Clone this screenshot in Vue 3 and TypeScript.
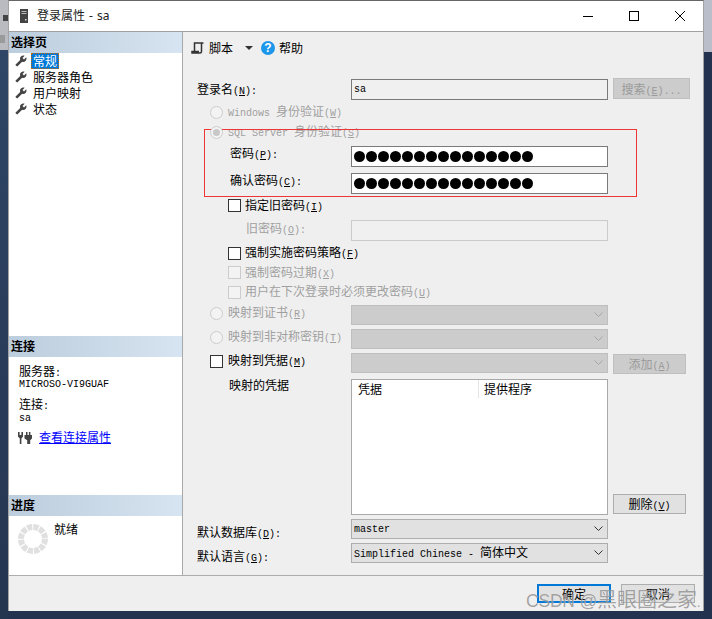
<script setup lang="ts">
const dots: number[] = Array.from({ length: 15 }, (_, i) => i)
const navItems: string[] = ['常规', '服务器角色', '用户映射', '状态']
const wrench =
  'M1.3 19l9.1-9.1c-.9-2.3-.4-5 1.5-6.9 2-2 5-2.4 7.4-1.3L15 6l3 3 4.4-4.3c1.2 2.4.7 5.4-1.3 7.4-1.9 1.9-4.6 2.4-6.9 1.5l-9.1 9.1c-.4.4-1 .4-1.4 0l-2.3-2.3c-.5-.4-.5-1.1-.1-1.4z'
</script>

<template>
  <div class="desk">
    <div class="strip-left"><span class="blot"></span><span class="patch"></span></div>
    <div class="strip-right"></div>

    <div class="win">
      <header class="title">
        <svg class="srv" width="8" height="14" viewBox="0 0 8 14">
          <rect width="8" height="14" fill="#444" />
          <rect x="1.5" y="2" width="5" height="1" fill="#bbb" />
          <rect x="1.5" y="4" width="5" height="1" fill="#bbb" />
          <rect x="5" y="10" width="1.5" height="1.5" fill="#ddd" />
        </svg>
        <span class="title-text">登录属性 - sa</span>
        <div class="controls">
          <div class="ctl">
            <svg width="10" height="10" viewBox="0 0 10 10"><path d="M0 5.5H10" stroke="#000" fill="none" /></svg>
          </div>
          <div class="ctl">
            <svg width="10" height="10" viewBox="0 0 10 10"><rect x=".5" y=".5" width="9" height="9" stroke="#000" fill="none" /></svg>
          </div>
          <div class="ctl">
            <svg width="10" height="10" viewBox="0 0 10 10"><path d="M0 0L10 10M10 0L0 10" stroke="#000" fill="none" /></svg>
          </div>
        </div>
      </header>

      <div class="main">
        <aside class="side">
          <section class="nav">
            <h3 class="sec">选择页</h3>
            <ul class="nav-list">
              <li v-for="(item, i) in navItems" :key="item" class="nav-item">
                <svg width="12" height="12" viewBox="0 0 24 24"><path :d="wrench" fill="#444" /></svg>
                <span :class="{ sel: i === 0 }">{{ item }}</span>
              </li>
            </ul>
          </section>

          <section class="conn">
            <h3 class="sec">连接</h3>
            <div class="conn-body">
              <div class="k">服务器<span class="l">:</span></div>
              <div class="v l">MICROSO-VI9GUAF</div>
              <div class="k k2">连接<span class="l">:</span></div>
              <div class="v v2 l">sa</div>
              <div class="link-row">
                <svg class="plug" width="14" height="14" viewBox="0 0 14 14" fill="#444">
                  <path d="M0 1h1.6v3h1.8V1H5v4.5L3.4 7.5V13H1.8V7.5L0 5.5z" />
                  <path d="M8 1h1.5v3h1.4V1h1.5v3H14v3.5l-1.8 1.7V13h-3V9.2L6.5 7.5V4H8z" />
                </svg>
                <a class="link">查看连接属性</a>
              </div>
            </div>
          </section>

          <section class="prog">
            <h3 class="sec">进度</h3>
            <div class="prog-body">
              <svg class="spin" width="30" height="30" viewBox="0 0 30 30">
                <circle cx="15" cy="15" r="12" fill="none" stroke="#e0e0e0" stroke-width="6" stroke-dasharray="5.2 1.08" />
              </svg>
              <span class="ready">就绪</span>
            </div>
          </section>
        </aside>

        <div class="pane">
          <div class="toolbar">
            <svg width="13" height="12" viewBox="0 0 13 12" fill="none" stroke="#333" stroke-width="1.5">
              <path d="M3.5 9V1H12.5M10.5 1V9.5C10.5 10.5 10 11 9 11H1V9.5H8" />
            </svg>
            <span class="tb-text">脚本</span>
            <span class="caret"></span>
            <span class="help">?</span>
            <span class="tb-text help-text">帮助</span>
          </div>

          <form class="form" @submit.prevent>
            <div class="redbox"></div>

            <div class="row h22">
              <label class="lab">登录名<span class="l">(<u>N</u>):</span></label>
              <div class="field ro l">sa</div>
              <button class="btn off search" type="button">搜索<span class="l">(<u>E</u>)...</span></button>
            </div>

            <div class="row h20 mt2">
              <div class="opt off-text in13"><span class="radio dis"></span>
                <span class="otext"><span class="l">Windows </span>身份验证<span class="l">(<u>W</u>)</span></span>
              </div>
            </div>
            <div class="row h20">
              <div class="opt off-text in13"><span class="radio dis on"></span>
                <span class="otext"><span class="l">SQL Server </span>身份验证<span class="l">(<u>S</u>)</span></span>
              </div>
            </div>

            <div class="row h21 mt4">
              <label class="lab in33 up1">密码<span class="l">(<u>P</u>):</span></label>
              <div class="field pw"><i v-for="d in dots" :key="d" class="dot"></i></div>
            </div>
            <div class="row h21 mt6">
              <label class="lab in33 up1">确认密码<span class="l">(<u>C</u>):</span></label>
              <div class="field pw"><i v-for="d in dots" :key="d" class="dot"></i></div>
            </div>

            <div class="row h21 mt1">
              <div class="opt opt2 in32"><span class="check"></span>
                <span class="otext">指定旧密码<span class="l">(<u>I</u>)</span></span>
              </div>
            </div>
            <div class="row h21 mt4">
              <label class="lab in49 off-text">旧密码<span class="l">(<u>O</u>):</span></label>
              <div class="field dis"></div>
            </div>

            <div class="row h20 mt2">
              <div class="opt opt2 in32"><span class="check"></span>
                <span class="otext">强制实施密码策略<span class="l">(<u>F</u>)</span></span>
              </div>
            </div>
            <div class="row h19">
              <div class="opt opt2 in32 off-text"><span class="check dis"></span>
                <span class="otext">强制密码过期<span class="l">(<u>X</u>)</span></span>
              </div>
            </div>
            <div class="row h20">
              <div class="opt opt2 in32 off-text"><span class="check dis"></span>
                <span class="otext">用户在下次登录时必须更改密码<span class="l">(<u>U</u>)</span></span>
              </div>
            </div>

            <div class="row h20 mt3">
              <div class="opt h16 off-text in13"><span class="radio dis"></span>
                <span class="otext">映射到证书<span class="l">(<u>R</u>)</span></span>
              </div>
              <div class="combo dis">
                <svg class="chev" width="9" height="5" viewBox="0 0 9 5"><path d="M.5 .5L4.5 4.5L8.5 .5" /></svg>
              </div>
            </div>
            <div class="row h20 mt4">
              <div class="opt h16 off-text in13"><span class="radio dis"></span>
                <span class="otext">映射到非对称密钥<span class="l">(<u>T</u>)</span></span>
              </div>
              <div class="combo dis">
                <svg class="chev" width="9" height="5" viewBox="0 0 9 5"><path d="M.5 .5L4.5 4.5L8.5 .5" /></svg>
              </div>
            </div>
            <div class="row h20 mt4">
              <div class="opt h16 in13"><span class="check"></span>
                <span class="otext">映射到凭据<span class="l">(<u>M</u>)</span></span>
              </div>
              <div class="combo dis">
                <svg class="chev" width="9" height="5" viewBox="0 0 9 5"><path d="M.5 .5L4.5 4.5L8.5 .5" /></svg>
              </div>
              <button class="btn off add" type="button">添加<span class="l">(<u>A</u>)</span></button>
            </div>

            <div class="row h136 mt6">
              <label class="lab in-list">映射的凭据</label>
              <div class="list">
                <div class="list-head">
                  <span class="col-a">凭据</span>
                  <span class="col-b">提供程序</span>
                </div>
              </div>
              <button class="btn del" type="button">删除<span class="l">(<u>V</u>)</span></button>
            </div>

            <div class="row h20 mt4">
              <label class="lab pt5">默认数据库<span class="l">(<u>D</u>):</span></label>
              <div class="combo en">
                <span class="l master">master</span>
                <svg class="chev" width="9" height="5" viewBox="0 0 9 5"><path d="M.5 .5L4.5 4.5L8.5 .5" /></svg>
              </div>
            </div>
            <div class="row h20 mt4">
              <label class="lab pt5">默认语言<span class="l">(<u>G</u>):</span></label>
              <div class="combo en">
                <span class="lang"><span class="l">Simplified Chinese - </span>简体中文</span>
                <svg class="chev" width="9" height="5" viewBox="0 0 9 5"><path d="M.5 .5L4.5 4.5L8.5 .5" /></svg>
              </div>
            </div>
          </form>
        </div>
      </div>

      <footer class="foot">
        <button class="fbtn primary" type="button">确定</button>
        <button class="fbtn" type="button">取消</button>
      </footer>
    </div>

    <div class="mark"><span class="mark-l">CSDN @</span>黑眼圈之家<span class="mark-d">.</span></div>
  </div>
</template>

<style>
html,
body {
  margin: 0;
  background: #23324f;
}
</style>

<style scoped>
* {
  box-sizing: border-box;
}
.desk {
  position: relative;
  width: 712px;
  height: 619px;
  overflow: hidden;
  padding: 0 8px 8px;
  background: #23324f;
  font-family: "Noto Sans CJK SC", "Liberation Mono", monospace;
  font-size: 12px;
  line-height: 16px;
  color: #000;
}
.strip-left {
  position: absolute;
  left: 0;
  top: 0;
  width: 8px;
  height: 50px;
  background: #b9bbc0;
}
.strip-left::after {
  content: "";
  position: absolute;
  left: 0;
  top: 50px;
  width: 8px;
  height: 569px;
  background: linear-gradient(180deg, #2f4666, #243550);
}
.blot {
  position: absolute;
  left: 3px;
  top: 15px;
  width: 5px;
  height: 6px;
  background: #444;
}
.patch {
  position: absolute;
  left: 0;
  top: 35px;
  width: 5px;
  height: 8px;
  background: #9a9a9a;
}
.strip-right {
  position: absolute;
  right: 0;
  top: 0;
  width: 8px;
  height: 52px;
  background: #babdca;
}
.l {
  font-family: "Liberation Mono", monospace;
  font-size: 10px;
  line-height: 1;
}
u {
  text-decoration: underline;
}
.win {
  position: relative;
  display: flex;
  flex-direction: column;
  width: 696px;
  height: 611px;
  border: 1px solid #a3a3a3;
  border-top-color: #666;
  border-bottom: 0;
  background: #efefef;
}
.title {
  display: flex;
  align-items: center;
  height: 31px;
  flex: none;
  padding-left: 11px;
  background: #fff;
  border-bottom: 1px solid #a0a0a0;
}
.srv {
  margin-top: -1px;
}
.title-text {
  margin-left: 9px;
  font-family: "Noto Sans", "Noto Sans CJK SC", sans-serif;
  word-spacing: 1px;
  color: #222;
}
.controls {
  display: flex;
  margin-left: auto;
  align-self: stretch;
}
.ctl {
  display: flex;
  align-items: center;
  justify-content: center;
  width: 46px;
  padding-bottom: 1px;
}
.ctl svg {
  display: block;
}
.main {
  display: flex;
  height: 543px;
  flex: none;
}
.side {
  display: flex;
  flex-direction: column;
  width: 174px;
  flex: none;
  background: #fff;
  border-right: 1px solid #a9a9a9;
}
.sec {
  margin: 0;
  height: 21px;
  padding-left: 2px;
  font-size: 12px;
  font-weight: 700;
  line-height: 20px;
  background: linear-gradient(90deg, #bccddd, #d7e4f1);
}
.nav {
  height: 304px;
}
.nav-list {
  margin: 0;
  padding: 0;
  list-style: none;
}
.nav-item {
  display: flex;
  align-items: center;
  height: 16px;
  padding-left: 6px;
}
.nav-item svg {
  flex: none;
}
.nav-item span {
  margin-left: 5px;
  padding: 0 1px;
}
.nav-item .sel {
  margin-left: 4px;
  padding: 0 2px;
  background: #0078d7;
  color: #fff;
  outline: 1px dotted #c46a00;
  outline-offset: -1px;
}
.conn {
  height: 159px;
}
.conn-body {
  padding: 7px 0 0 10px;
}
.k {
  line-height: 13px;
}
.k2 {
  margin-top: 7px;
}
.v {
  line-height: 11px;
}
.v2 {
  margin-top: 1px;
}
.link-row {
  display: flex;
  align-items: center;
  gap: 7px;
  margin-top: 5px;
  margin-left: -1px;
}
.plug {
  margin-top: 2px;
}
.link {
  color: #0000ff;
  text-decoration: underline;
}
.prog {
  height: 80px;
}
.prog-body {
  display: flex;
  align-items: flex-start;
  gap: 6px;
  padding: 5px 0 0 9px;
}
.spin {
  margin-top: 3px;
}
.pane {
  flex: 1;
  min-width: 0;
}
.toolbar {
  display: flex;
  align-items: center;
  height: 32px;
  padding-left: 8px;
}
.tb-text {
  margin-left: 5px;
}
.caret {
  width: 0;
  height: 0;
  margin-left: 12px;
  border: 4px solid transparent;
  border-top: 4px solid #333;
  border-bottom: 0;
}
.help {
  display: flex;
  align-items: center;
  justify-content: center;
  width: 14px;
  height: 14px;
  margin-left: 8px;
  border-radius: 50%;
  background: #1c97ea;
  color: #fff;
  font-family: "Liberation Sans", sans-serif;
  font-size: 12px;
  font-weight: 700;
}
.help-text {
  margin-left: 4px;
}
.form {
  position: relative;
  padding: 14px 0 0 14px;
}
.redbox {
  position: absolute;
  left: 21px;
  top: 65px;
  width: 433px;
  height: 68px;
  border: 1px solid #ee3636;
  pointer-events: none;
}
.row {
  display: grid;
  grid-template-columns: 149px 257px 77px;
  column-gap: 5px;
  align-items: start;
}
.h19 { height: 19px; }
.h20 { height: 20px; }
.h21 { height: 21px; }
.h22 { height: 22px; }
.h136 { height: 136px; }
.mt1 { margin-top: 1px; }
.mt2 { margin-top: 2px; }
.mt3 { margin-top: 3px; }
.mt4 { margin-top: 4px; }
.mt6 { margin-top: 6px; }
.lab {
  display: block;
  white-space: nowrap;
}
.h22 .lab {
  padding-top: 3px;
}
.up1 { margin-top: -1px; }
.in33 { padding-left: 33px; }
.in49 { padding-left: 49px; }
.in13 { padding-left: 13px; }
.in32 { padding-left: 31px; }
.in-list { padding-left: 32px; margin-top: -2px; }
.pt5 { padding-top: 5px; }
.off-text {
  color: #a0a0a0;
}
.opt {
  display: flex;
  align-items: center;
  gap: 5px;
  height: 100%;
  white-space: nowrap;
}
.otext {
  margin-bottom: 2px;
}
.opt.h16 {
  height: 16px;
}
.opt2 {
  gap: 4px;
}
.row > .opt {
  grid-column: 1 / 2;
}
.radio {
  position: relative;
  width: 13px;
  height: 13px;
  flex: none;
  border-radius: 50%;
  border: 1px solid #333;
  background: #fff;
}
.radio.dis {
  border-color: #ccc;
  background: #f3f3f3;
}
.radio.on::after {
  content: "";
  position: absolute;
  inset: 2px;
  border-radius: 50%;
  background: #c8c8c8;
}
.check {
  width: 13px;
  height: 13px;
  flex: none;
  border: 1px solid #333;
  background: #fff;
}
.check.dis {
  border-color: #ccc;
  background: #f3f3f3;
}
.field {
  display: flex;
  align-items: center;
  width: 257px;
  height: 21px;
  padding-left: 2px;
  border: 1px solid #7a7a7a;
  background: #fff;
}
.h22 .field {
  margin-top: 1px;
}
.field.ro {
  background: #f0f0f0;
}
.field.dis {
  border-color: #cbcbcb;
  background: #f0f0f0;
}
.pw {
  gap: 1px;
}
.dot {
  display: block;
  width: 11px;
  height: 11px;
  flex: none;
  border-radius: 50%;
  background: #000;
}
.btn {
  display: block;
  height: 21px;
  padding: 0;
  border: 1px solid #adadad;
  background: #e1e1e1;
  color: #000;
  font: inherit;
  line-height: 18px;
  text-align: center;
}
.btn.off {
  border-color: #bfbfbf;
  background: #cccccc;
  color: #9a9a9a;
}
.add {
  width: 73px;
  margin-top: 1px;
  height: 20px;
}
.del {
  width: 73px;
  height: 20px;
  align-self: start;
  margin-top: 115px;
}
.combo {
  position: relative;
  display: flex;
  align-items: center;
  width: 257px;
  height: 20px;
  padding-left: 2px;
}
.combo.dis {
  border: 1px solid #bfbfbf;
  background: #cccccc;
}
.combo.en {
  border: 1px solid #adadad;
  background: #e1e1e1;
}
.master {
  margin-top: 2px;
}
.lang {
  margin-bottom: 2px;
}
.chev {
  position: absolute;
  right: 4px;
  top: 6px;
  fill: none;
  stroke: #333;
}
.combo.dis .chev {
  stroke: #a6a6a6;
}
.list {
  width: 257px;
  height: 136px;
  border: 1px solid #a9a9a9;
  background: #fff;
}
.list-head {
  position: relative;
  display: flex;
  height: 18px;
  line-height: 18px;
}
.col-a {
  width: 127px;
  padding-left: 6px;
  border-right: 1px solid #e5e5e5;
}
.col-b {
  padding-left: 5px;
}
.foot {
  display: flex;
  gap: 10px;
  justify-content: flex-end;
  height: 37px;
  padding: 8px 8px 0 0;
  border-top: 1px solid #adadad;
}
.fbtn {
  width: 74px;
  height: 19px;
  padding: 0;
  border: 1px solid #adadad;
  background: #e1e1e1;
  color: #000;
  font: inherit;
  line-height: 16px;
}
.fbtn.primary {
  border: 2px solid #0078d7;
  line-height: 14px;
}
.mark {
  position: absolute;
  left: 526px;
  top: 585px;
  white-space: nowrap;
  font-size: 20px;
  line-height: 28px;
  color: rgba(125, 125, 125, 0.7);
  text-shadow: 0 0 1px rgba(255, 255, 255, 0.6);
}
.mark-l {
  font-family: "Liberation Sans", sans-serif;
  font-size: 17.5px;
  letter-spacing: -0.2px;
}
.mark-d {
  font-size: 12px;
}
</style>
